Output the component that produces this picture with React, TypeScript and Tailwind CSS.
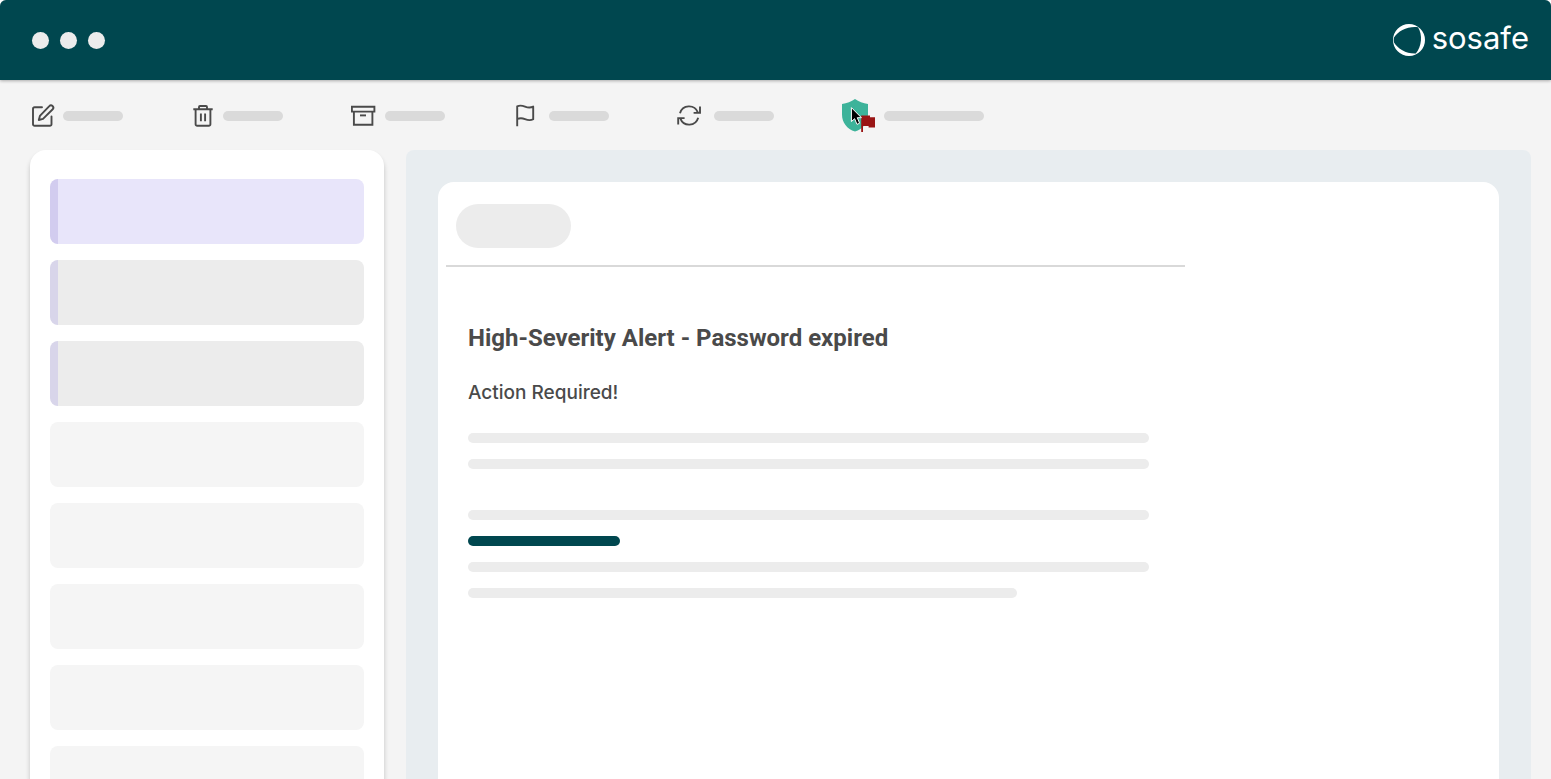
import type { ReactNode } from "react";

function EditIcon() {
  return (
    <svg width="24" height="24" viewBox="0 0 24 24" fill="none" stroke="currentColor" strokeWidth="1.9" strokeLinecap="round" strokeLinejoin="round" aria-hidden="true">
      <path d="M11 3.3H3.6A1.6 1.6 0 0 0 2 4.9V20.2A1.6 1.6 0 0 0 3.6 21.8H18.9A1.6 1.6 0 0 0 20.5 20.2V12.5" />
      <path d="M7.8 16L8.9 11.9L18.3 2.2A2 2 0 0 1 21.7 5.3L12 14.9Z" />
    </svg>
  );
}

function TrashIcon() {
  return (
    <svg width="24" height="24" viewBox="0 0 24 24" fill="none" stroke="currentColor" strokeWidth="1.9" strokeLinejoin="round" aria-hidden="true">
      <path d="M2.3 5.2H21.7" />
      <path d="M8 5V3A1 1 0 0 1 9 2H15A1 1 0 0 1 16 3V5" />
      <path d="M4.6 5.2V20.2A1.6 1.6 0 0 0 6.2 21.8H17.8A1.6 1.6 0 0 0 19.4 20.2V5.2" />
      <path d="M9.9 9.5V17.3M14.1 9.5V17.3" />
    </svg>
  );
}

function ArchiveIcon() {
  return (
    <svg width="26" height="24" viewBox="0 0 26 24" fill="none" stroke="currentColor" strokeWidth="1.9" aria-hidden="true">
      <path d="M0.9 2.7H23.4V7.6H0.9Z" />
      <path d="M2.9 7.6V20.7H21.4V7.6" />
      <path d="M9 11.4H15" />
    </svg>
  );
}

function FlagIcon() {
  return (
    <svg width="28" height="24" viewBox="0 0 28 24" fill="none" stroke="currentColor" strokeWidth="1.9" strokeLinejoin="round" aria-hidden="true">
      <path d="M4.2 22.3V2.3C7 1 10 1.8 12 2.6C14.5 3.6 17.5 4 20.2 2.6V15.2C17.5 16.8 14.8 16.3 12 15.1C9.5 14 6.8 13.8 4.2 15" />
    </svg>
  );
}

function SyncIcon() {
  return (
    <svg width="29" height="24" viewBox="0 0 29 24" fill="none" stroke="currentColor" strokeWidth="1.9" aria-hidden="true">
      <path d="M3 9.2A9.4 9.4 0 0 1 20.8 8.4" />
      <path d="M23 2.6V8.9H16.6" />
      <path d="M21.2 13.8A9.4 9.4 0 0 1 3.4 14.6" />
      <path d="M1.2 20.4V14.1H7.6" />
    </svg>
  );
}

function ReportIcon() {
  return (
    <svg width="34" height="34" viewBox="0 0 34 34" aria-hidden="true">
      <path d="M13 0C16.8 2.6 21 4.4 26 5V15.5C26 23.5 21 30 13 32.6C5 30 0 23.5 0 15.5V5C5 4.4 9.2 2.6 13 0Z" fill="#3db39a" />
      <path d="M19.2 16.6H28V18.3H33V28.6H26.6V27H21V33H19.2Z" fill="#991414" />
      <path d="M9.4 8.6V22.6L12.6 19.7L15 25.4L17.6 24.2L15.3 18.7H19.4Z" fill="#000" stroke="#fff" strokeWidth="1" />
    </svg>
  );
}

function LogoMark() {
  return (
    <svg width="32" height="32" viewBox="0 0 32 32" fill="#fff" aria-hidden="true">
      <path
        fillRule="evenodd"
        d="M16 0A16 16 0 1 1 16 32A16 16 0 1 1 16 0ZM25 3.2C15.5 1.8 5 6.8 1 13.6C0.6 15.2 0.6 16.8 1 18.4C5 24.8 13.2 29.8 22.8 29.4C28.8 22.5 29.8 10.5 25 3.2Z"
      />
    </svg>
  );
}

type Tool = { label: string; icon: ReactNode; bar: string };

const tools: Tool[] = [
  { label: "Edit", icon: <EditIcon />, bar: "w-[60px]" },
  { label: "Delete", icon: <TrashIcon />, bar: "w-[60px]" },
  { label: "Archive", icon: <ArchiveIcon />, bar: "w-[60px]" },
  { label: "Flag", icon: <FlagIcon />, bar: "w-[60px]" },
  { label: "Refresh", icon: <SyncIcon />, bar: "w-[60px]" },
  { label: "Report email", icon: <ReportIcon />, bar: "w-[100px]" },
];

const messages = [
  "border-l-8 border-[#d2ccef] bg-[#e8e5fa]",
  "border-l-8 border-[#d8d5ea] bg-[#ececec]",
  "border-l-8 border-[#d8d5ea] bg-[#ececec]",
  "bg-[#f5f5f5]",
  "bg-[#f5f5f5]",
  "bg-[#f5f5f5]",
  "bg-[#f5f5f5]",
  "bg-[#f5f5f5]",
];

function Line({ className }: { className: string }) {
  return <div className={`h-[10px] w-full rounded-full ${className}`} />;
}

export default function App() {
  return (
    <div className="flex h-screen flex-col overflow-hidden rounded-t-md bg-[#f4f4f4] text-[#4a4a4a]">
      <header className="flex h-20 shrink-0 items-center justify-between bg-[#00474f] pl-8 pr-[22px] shadow-[0_1px_3px_rgba(0,0,0,0.3)]">
        <div className="flex gap-[11px]">
          <span className="size-[17px] rounded-full bg-[#ececec]" />
          <span className="size-[17px] rounded-full bg-[#ececec]" />
          <span className="size-[17px] rounded-full bg-[#ececec]" />
        </div>
        <div className="flex items-center gap-[7px]">
          <LogoMark />
          <span className="pb-1 font-['Inter',sans-serif] text-[31px] leading-8 text-white">sosafe</span>
        </div>
      </header>

      <nav className="flex h-[70px] shrink-0 items-center gap-[68px] pl-[31px] pt-[2px]">
        {tools.map((tool) => (
          <button key={tool.label} type="button" aria-label={tool.label} className="flex items-center gap-2">
            {tool.icon}
            <span className={`h-[10px] rounded-full bg-[#dadada] ${tool.bar}`} />
          </button>
        ))}
      </nav>

      <div className="flex min-h-0 flex-1 gap-[22px] pl-[30px] pr-5">
        <aside className="w-[354px] shrink-0 rounded-t-2xl bg-white px-5 pt-[29px] shadow-[0_4px_5px_rgba(0,0,0,0.2)]">
          <ul className="flex flex-col gap-4">
            {messages.map((tone, index) => (
              <li key={index} className={`h-[65px] rounded-lg ${tone}`} />
            ))}
          </ul>
        </aside>

        <main className="flex flex-1 rounded-t-lg bg-[#e8edf0] px-8 pt-8">
          <article className="flex-1 rounded-t-2xl bg-white pl-2 pt-[22px]">
            <div className="ml-[10px] h-11 w-[115px] rounded-full bg-[#ececec]" />
            <hr className="mt-[17px] w-full max-w-[739px] border-t-2 border-[#d9d9d9]" />
            <div className="max-w-[703px] pl-[22px] pt-[55px]">
              <h1 className="font-['Roboto',sans-serif] text-2xl font-bold">High-Severity Alert - Password expired</h1>
              <p className="mt-[25px] font-['Inter',sans-serif] text-[19px] leading-7 font-medium">Action Required!</p>
              <div className="mt-[26px] flex flex-col gap-4">
                <Line className="bg-[#ececec]" />
                <Line className="bg-[#ececec]" />
                <Line className="mt-[25px] bg-[#ececec]" />
                <Line className="max-w-[152px] bg-[#00474f]" />
                <Line className="bg-[#ececec]" />
                <Line className="max-w-[549px] bg-[#ececec]" />
              </div>
            </div>
          </article>
        </main>
      </div>
    </div>
  );
}
